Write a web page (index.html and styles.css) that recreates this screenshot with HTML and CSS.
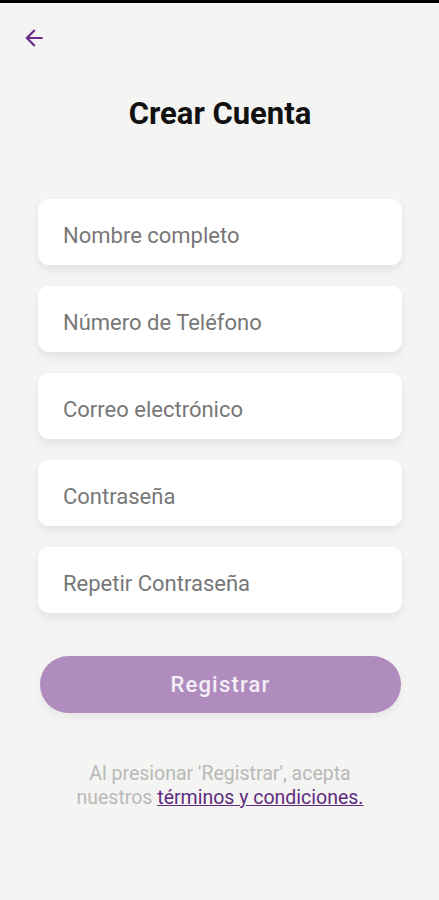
FILE: index.html
```html
<!DOCTYPE html>
<html lang="es">
<head>
  <meta charset="UTF-8" />
  <meta name="viewport" content="width=device-width, initial-scale=1.0" />
  <title>Crear Cuenta</title>
  <link rel="stylesheet" href="styles.css">
</head>
<body>
  <div class="statusbar"></div>
  <div class="screen">
    <button class="back" aria-label="Volver">
      <svg width="26" height="26" viewBox="0 0 24 24"><path d="M20 11H7.83l5.59-5.59L12 4l-8 8 8 8 1.41-1.41L7.83 13H20v-2z" fill="#6b2a8c"/></svg>
    </button>
    <h1 class="title">Crear Cuenta</h1>

    <form class="form">
      <input class="field" type="text" placeholder="Nombre completo" />
      <input class="field" type="tel" placeholder="Número de Teléfono" />
      <input class="field" type="email" placeholder="Correo electrónico" />
      <input class="field" type="password" placeholder="Contraseña" />
      <input class="field" type="password" placeholder="Repetir Contraseña" />
      <button class="submit" type="submit">Registrar</button>
    </form>

    <p class="terms">Al presionar 'Registrar', acepta<br>nuestros <a href="#">términos y condiciones.</a></p>
  </div>
</body>
</html>
```

FILE: styles.css
```css
body {
  margin: 0;
  background: #f4f4f2;
  font-family: Roboto, 'Noto Sans', sans-serif;
  color: #111;
}
.statusbar {
  height: 3px;
  background: #000;
}
.screen {
  padding: 0 37px 0 38px;
}
.back {
  display: block;
  border: none;
  background: none;
  padding: 0;
  margin: 22px 0 0 -17px;
  width: 26px;
  height: 26px;
  cursor: pointer;
}
.title {
  margin: 45px 0 0;
  text-align: center;
  font-size: 31px;
  font-weight: 700;
  line-height: 36px;
  color: #111;
}
.form {
  display: flex;
  flex-direction: column;
  gap: 21px;
  margin-top: 67px;
}
.field {
  box-sizing: border-box;
  height: 66px;
  border: none;
  border-radius: 11px;
  background: #fff;
  padding: 6px 25px 0;
  font-family: inherit;
  font-size: 22px;
  color: #333;
  box-shadow: 0 5px 8px rgba(0, 0, 0, 0.07);
  outline: none;
}
.field::placeholder {
  color: #777;
}
.submit {
  height: 57px;
  margin: 22px 1px 0 2px;
  border: none;
  border-radius: 29px;
  background: #af8cbd;
  color: #f4eef6;
  font-family: inherit;
  font-size: 22px;
  font-weight: 500;
  letter-spacing: 1.2px;
  box-shadow: 0 4px 8px rgba(0, 0, 0, 0.06);
  cursor: pointer;
}
.terms {
  margin: 49px 0 0;
  text-align: center;
  font-size: 19.5px;
  line-height: 24px;
  color: #b9b9b9;
}
.terms a {
  color: #5f2a80;
  text-decoration: underline;
}
```
